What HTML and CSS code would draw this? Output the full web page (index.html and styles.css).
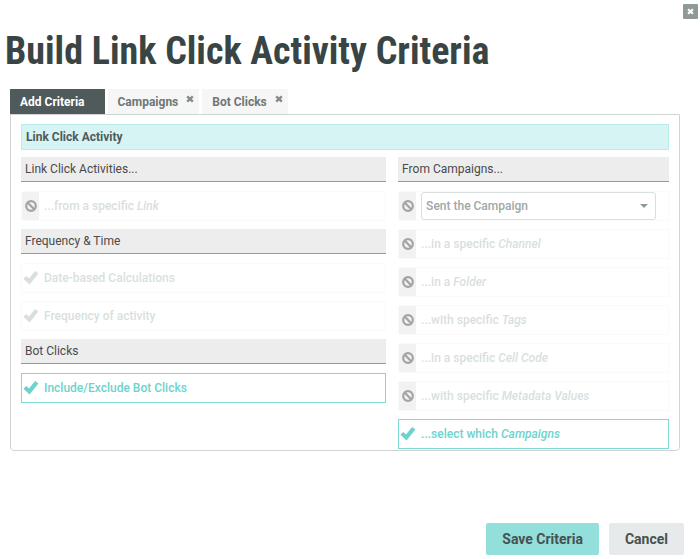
FILE: index.html
```html
<!DOCTYPE html>
<html lang="en">
<head>
    <meta charset="UTF-8">
    <meta name="viewport" content="width=device-width, initial-scale=1.0">
    <title>Build Link Click Activity Criteria</title>
    <link rel="stylesheet" href="styles.css">
</head>
<body>
    <!-- Shared icons -->
    <svg class="sprite" aria-hidden="true">
        <symbol id="icon-check" viewBox="0 0 16 16">
            <path d="M0.4 8.7 L3.3 5.9 L6 8.5 L12.1 1 L15.4 3.4 L6.6 14.4 Z"/>
        </symbol>
        <symbol id="icon-ban" viewBox="0 0 12 12">
            <circle cx="6" cy="6" r="4.8" fill="none" stroke="currentColor" stroke-width="2.2"/>
            <path d="M2.8 2.8 L9.2 9.2" stroke="currentColor" stroke-width="2.2"/>
        </symbol>
        <symbol id="icon-times" viewBox="0 0 8 8">
            <path d="M1.2 1.4 L6.8 6.6 M6.8 1.4 L1.2 6.6" stroke="currentColor" stroke-width="2.4"/>
        </symbol>
    </svg>

    <div class="dialog" role="dialog" aria-labelledby="dialog-title">
        <div class="dialog-top">
            <button type="button" class="close-btn" aria-label="Close"><svg><use href="#icon-times"/></svg></button>
        </div>
        <h1 id="dialog-title">Build Link Click Activity Criteria</h1>

        <div class="tabs">
            <button type="button" class="tab active">Add Criteria</button>
            <div class="tab-group">
                <button type="button" class="tab">Campaigns</button>
                <button type="button" class="tab-close" aria-label="Remove Campaigns"><svg><use href="#icon-times"/></svg></button>
            </div>
            <div class="tab-group">
                <button type="button" class="tab">Bot Clicks</button>
                <button type="button" class="tab-close" aria-label="Remove Bot Clicks"><svg><use href="#icon-times"/></svg></button>
            </div>
        </div>

        <div class="panel">
            <h2 class="banner">Link Click Activity</h2>
            <div class="columns">
                <div class="column">
                    <h3>Link Click Activities...</h3>
                    <button type="button" class="item blocked"><span class="icon"><svg><use href="#icon-ban"/></svg></span><span>...from a specific <em>Link</em></span></button>
                    <h3>Frequency &amp; Time</h3>
                    <button type="button" class="item"><span class="icon"><svg><use href="#icon-check"/></svg></span><span>Date-based Calculations</span></button>
                    <button type="button" class="item"><span class="icon"><svg><use href="#icon-check"/></svg></span><span>Frequency of activity</span></button>
                    <h3>Bot Clicks</h3>
                    <button type="button" class="item selected"><span class="icon"><svg><use href="#icon-check"/></svg></span><span>Include/Exclude Bot Clicks</span></button>
                </div>
                <div class="column">
                    <h3>From Campaigns...</h3>
                    <div class="item blocked">
                        <span class="icon"><svg><use href="#icon-ban"/></svg></span>
                        <div class="select-wrap">
                            <select aria-label="Campaign relation">
                                <option>Sent the Campaign</option>
                            </select>
                        </div>
                    </div>
                    <button type="button" class="item blocked"><span class="icon"><svg><use href="#icon-ban"/></svg></span><span>...in a specific <em>Channel</em></span></button>
                    <button type="button" class="item blocked"><span class="icon"><svg><use href="#icon-ban"/></svg></span><span>...in a <em>Folder</em></span></button>
                    <button type="button" class="item blocked"><span class="icon"><svg><use href="#icon-ban"/></svg></span><span>...with specific <em>Tags</em></span></button>
                    <button type="button" class="item blocked"><span class="icon"><svg><use href="#icon-ban"/></svg></span><span>...in a specific <em>Cell Code</em></span></button>
                    <button type="button" class="item blocked"><span class="icon"><svg><use href="#icon-ban"/></svg></span><span>...with specific <em>Metadata Values</em></span></button>
                    <button type="button" class="item selected"><span class="icon"><svg><use href="#icon-check"/></svg></span><span>...select which <em>Campaigns</em></span></button>
                </div>
            </div>
        </div>

        <div class="actions">
            <button type="button" class="btn btn-primary">Save Criteria</button>
            <button type="button" class="btn">Cancel</button>
        </div>
    </div>
</body>
</html>
```

FILE: styles.css
```css
* {
    box-sizing: border-box;
}
body {
    margin: 0;
    background: #fff;
    color: #3b4545;
    font-family: Roboto, "Liberation Sans", sans-serif;
    font-size: 12px;
}
button, select {
    font: inherit;
    color: inherit;
    margin: 0;
    padding: 0;
    border: none;
    background: none;
    cursor: pointer;
}
svg {
    display: block;
    fill: currentColor;
}
.sprite {
    display: none;
}
.dialog-top {
    display: flex;
    justify-content: flex-end;
    padding: 4px 2px 0 0;
}
.close-btn {
    width: 15px;
    height: 15px;
    padding: 4px;
    background: #8f9997;
    border-radius: 1px;
    color: #fff;
}
.close-btn svg {
    width: 7px;
    height: 7px;
}
h1 {
    margin: 8px 0 14px 5px;
    font-family: "Roboto Condensed", Roboto, sans-serif;
    font-size: 38px;
    line-height: 48px;
    font-weight: 700;
    color: #394444;
}

/* Tabs */
.tabs {
    display: flex;
    gap: 3px;
    padding-left: 10px;
    font-weight: 700;
    color: #6f7675;
}
.tab-group {
    display: flex;
    background: #f6f6f6;
}
.tab {
    height: 25px;
    padding-left: 10px;
}
.tab.active {
    padding-right: 20px;
    background: #4f5a5a;
    color: #fff;
}
.tab-close {
    width: 21px;
    padding: 0 5px 5px 8px;
    color: #858b8a;
}
.tab-close svg {
    width: 8px;
    height: 8px;
}

/* Criteria panel */
.panel {
    margin: 0 20px 0 10px;
    padding: 9px 10px 1px;
    border: 1px solid #d2d4d4;
    border-radius: 0 0 4px 4px;
}
.banner {
    margin: 0 0 7px;
    padding-left: 4px;
    border: 1px solid #b9ece9;
    background: #d6f4f4;
    font-size: 12px;
    line-height: 24px;
    font-weight: 700;
    color: #4f5b5b;
}
.columns {
    display: grid;
    grid-template-columns: 31fr 23fr;
    gap: 12px;
    align-items: start;
}
.column {
    display: flex;
    flex-direction: column;
    gap: 8px;
}
h3 {
    margin: 0 0 1px;
    padding-left: 4px;
    border-bottom: 1px solid #999;
    background: #ededed;
    font-size: 12px;
    line-height: 24px;
    font-weight: 400;
    color: #4a4a4a;
}
.item {
    display: flex;
    align-items: center;
    gap: 5px;
    height: 30px;
    border: 1px solid #fafafa;
    font-weight: 500;
    text-align: left;
    color: #d9dfde;
}
.item .icon {
    display: flex;
    align-items: center;
    justify-content: center;
    width: 17px;
    height: 28px;
}
.item .icon svg {
    width: 16px;
    height: 16px;
}
.item.blocked .icon {
    background: #f2f2f2;
    color: #a3a3a3;
}
.item.blocked .icon svg {
    width: 12px;
    height: 12px;
}
.item.selected {
    border-color: #7fdad5;
    color: #6dd3ce;
}
.select-wrap {
    position: relative;
    flex: 1;
    margin-right: 12px;
}
.select-wrap::after {
    content: "";
    position: absolute;
    right: 8px;
    top: 12px;
    border: 4px solid transparent;
    border-top-color: #8f9997;
    border-bottom: none;
    pointer-events: none;
}
select {
    display: block;
    width: 100%;
    height: 28px;
    padding: 0 24px 0 4px;
    border: 1px solid #d9dfde;
    border-radius: 3px;
    background: #fff;
    color: #a0a7a6;
    appearance: none;
}

/* Footer */
.actions {
    display: flex;
    justify-content: flex-end;
    gap: 10px;
    padding: 72px 16px 4px;
}
.btn {
    height: 32px;
    padding: 0 16px;
    border-radius: 2px;
    background: #e6eaea;
    color: #465150;
    font-size: 14px;
    font-weight: 700;
}
.btn-primary {
    background: #92dfdb;
}
```
